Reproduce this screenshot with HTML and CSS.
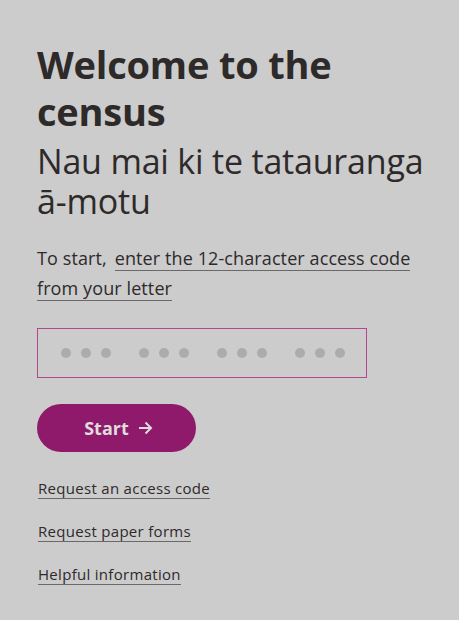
FILE: index.html
```html
<!DOCTYPE html>
<html>
<head>
  <title>Census</title>
  <link rel="stylesheet" href="styles.css">
</head>
<body>
  <div class="container">
    <h1>Welcome to the census</h1>
    <h2>Nau mai ki te tatauranga ā-motu</h2>
    <p class="intro">To start,<a href="#code" class="inline-link">enter the 12-character access code from your letter</a></p>
    <div class="code-input" id="code">
      <span class="group"><i></i><i></i><i></i></span>
      <span class="group"><i></i><i></i><i></i></span>
      <span class="group"><i></i><i></i><i></i></span>
      <span class="group"><i></i><i></i><i></i></span>
    </div>
    <button class="start">Start
      <svg class="arrow" width="15" height="14" viewBox="0 0 15 14"><path d="M1 7h12M7.5 1.5L13 7l-5.5 5.5" fill="none" stroke="currentColor" stroke-width="2"/></svg>
    </button>
    <ul class="links">
      <li><a href="#">Request an access code</a></li>
      <li><a href="#">Request paper forms</a></li>
      <li><a href="#">Helpful information</a></li>
    </ul>
  </div>
</body>
</html>
```

FILE: styles.css
```css
body {
  margin: 0;
  background: #cccccc;
  color: #2e2a2a;
  font-family: "Open Sans", sans-serif;
}
.container {
  padding: 41px 20px 20px 37px;
}
h1 {
  font-size: 38px;
  line-height: 47px;
  font-weight: 700;
  margin: 0;
  letter-spacing: -0.2px;
}
h2 {
  font-size: 34px;
  line-height: 40px;
  font-weight: 400;
  margin: 6px 0 0;
  letter-spacing: -0.2px;
}
.intro {
  font-size: 18px;
  line-height: 30px;
  margin: 22px 0 0;
  letter-spacing: 0.1px;
}
a {
  color: #2e2a2a;
  text-decoration: none;
  border-bottom: 1px solid #6a6868;
}
.inline-link {
  margin-left: 8px;
}
.code-input {
  margin-top: 25px;
  width: 330px;
  height: 50px;
  box-sizing: border-box;
  border: 1px solid #b3468c;
  display: flex;
  align-items: center;
  padding-left: 23px;
  gap: 28px;
}
.group {
  display: flex;
  gap: 10px;
}
.group i {
  width: 10px;
  height: 10px;
  border-radius: 50%;
  background: #acacac;
}
.start {
  margin-top: 26px;
  width: 159px;
  height: 48px;
  border: none;
  border-radius: 24px;
  background: #8f1a6b;
  color: #dddddd;
  font-family: "Open Sans", sans-serif;
  font-weight: 700;
  font-size: 18px;
  cursor: pointer;
  display: flex;
  align-items: center;
  justify-content: center;
  gap: 9px;
  padding: 0 0 0 4px;
}
.links {
  list-style: none;
  padding: 0;
  margin: 26px 0 0 1px;
}
.links li {
  font-size: 15px;
  line-height: 20px;
  margin-bottom: 23px;
  letter-spacing: 0.3px;
}
```
